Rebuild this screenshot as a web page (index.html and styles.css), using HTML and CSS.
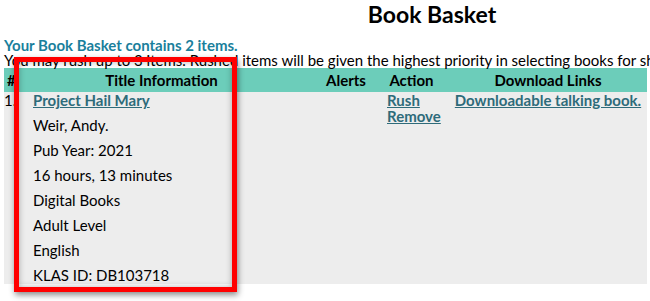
FILE: index.html
```html
<!DOCTYPE html>
<html lang="en">
<head>
<meta charset="utf-8">
<title>Book Basket</title>
<link rel="stylesheet" href="styles.css">
</head>
<body>
<div class="page">
  <h1 class="title">Book Basket</h1>
  <p class="count">Your Book Basket contains 2 items.</p>
  <p class="note">You may rush up to 3 items. Rushed items will be given the highest priority in selecting books for shipment.</p>
  <table class="basket">
    <colgroup>
      <col class="c-num"><col class="c-title"><col class="c-alerts"><col class="c-action"><col class="c-dl">
    </colgroup>
    <thead>
      <tr>
        <th class="h-num">#</th>
        <th class="h-title">Title Information</th>
        <th class="h-alerts">Alerts</th>
        <th class="h-action">Action</th>
        <th class="h-dl">Download Links</th>
      </tr>
    </thead>
    <tbody>
      <tr>
        <td class="d-num">1.</td>
        <td class="d-title">
          <div class="line"><a class="link" href="#">Project Hail Mary</a></div>
          <div class="line">Weir, Andy.</div>
          <div class="line">Pub Year: 2021</div>
          <div class="line">16 hours, 13 minutes</div>
          <div class="line">Digital Books</div>
          <div class="line">Adult Level</div>
          <div class="line">English</div>
          <div class="line">KLAS ID: DB103718</div>
        </td>
        <td class="d-alerts"></td>
        <td class="d-action">
          <a class="link" href="#">Rush</a><br>
          <a class="link" href="#">Remove</a>
        </td>
        <td class="d-dl"><a class="link" href="#">Downloadable talking book.</a></td>
      </tr>
    </tbody>
  </table>
  <div class="highlight"></div>
</div>
</body>
</html>
```

FILE: styles.css
```css
html {
  overflow: hidden;
}
body {
  margin: 0;
  padding: 0;
  background: #ffffff;
  font-family: Lato, "Liberation Sans", sans-serif;
  font-size: 15px;
  color: #000000;
}
.page {
  position: relative;
  width: 856px;
  height: 301px;
  padding: 0 4px;
}
.title {
  margin: 0;
  padding-top: 1px;
  font-size: 23px;
  line-height: 26px;
  font-weight: bold;
  text-align: center;
  color: #000;
}
.count {
  margin: 10px 0 0;
  font-weight: bold;
  color: #1a7f9c;
  line-height: 16px;
}
.note {
  margin: 0;
  line-height: 15px;
  white-space: nowrap;
}
.basket {
  width: 643px;
  border-collapse: collapse;
  table-layout: fixed;
  margin-top: 0;
}
.c-num { width: 15px; }
.c-title { width: 293px; }
.c-alerts { width: 68px; }
.c-action { width: 69px; }
.c-dl { width: 198px; }
.basket th {
  background: #6ccdba;
  height: 24px;
  padding: 0;
  font-weight: bold;
  text-align: center;
  line-height: 16px;
}
.basket .h-num { text-align: left; padding-left: 3px; }
.basket .h-title { padding-right: 8px; }
.basket .h-action { padding-right: 6px; }
.basket td {
  background: #ededed;
  vertical-align: top;
  padding: 0;
  line-height: 16px;
}
.basket .d-title { padding-left: 14px; padding-bottom: 1px; }
.line { margin-bottom: 9px; }
.line:last-child { margin-bottom: 0; }
.basket .d-action { padding-left: 7px; }
.basket .d-dl { text-align: center; }
.link {
  color: #2e6b7a;
  font-weight: bold;
  text-decoration: underline;
}
.highlight {
  position: absolute;
  left: 14px;
  top: 57px;
  width: 223px;
  height: 235px;
  box-sizing: border-box;
  border: 5px solid #ff0000;
  box-shadow: 1px 3px 6px rgba(0, 0, 0, 0.45), inset 0 0 6px rgba(0, 0, 0, 0.3);
}
```
